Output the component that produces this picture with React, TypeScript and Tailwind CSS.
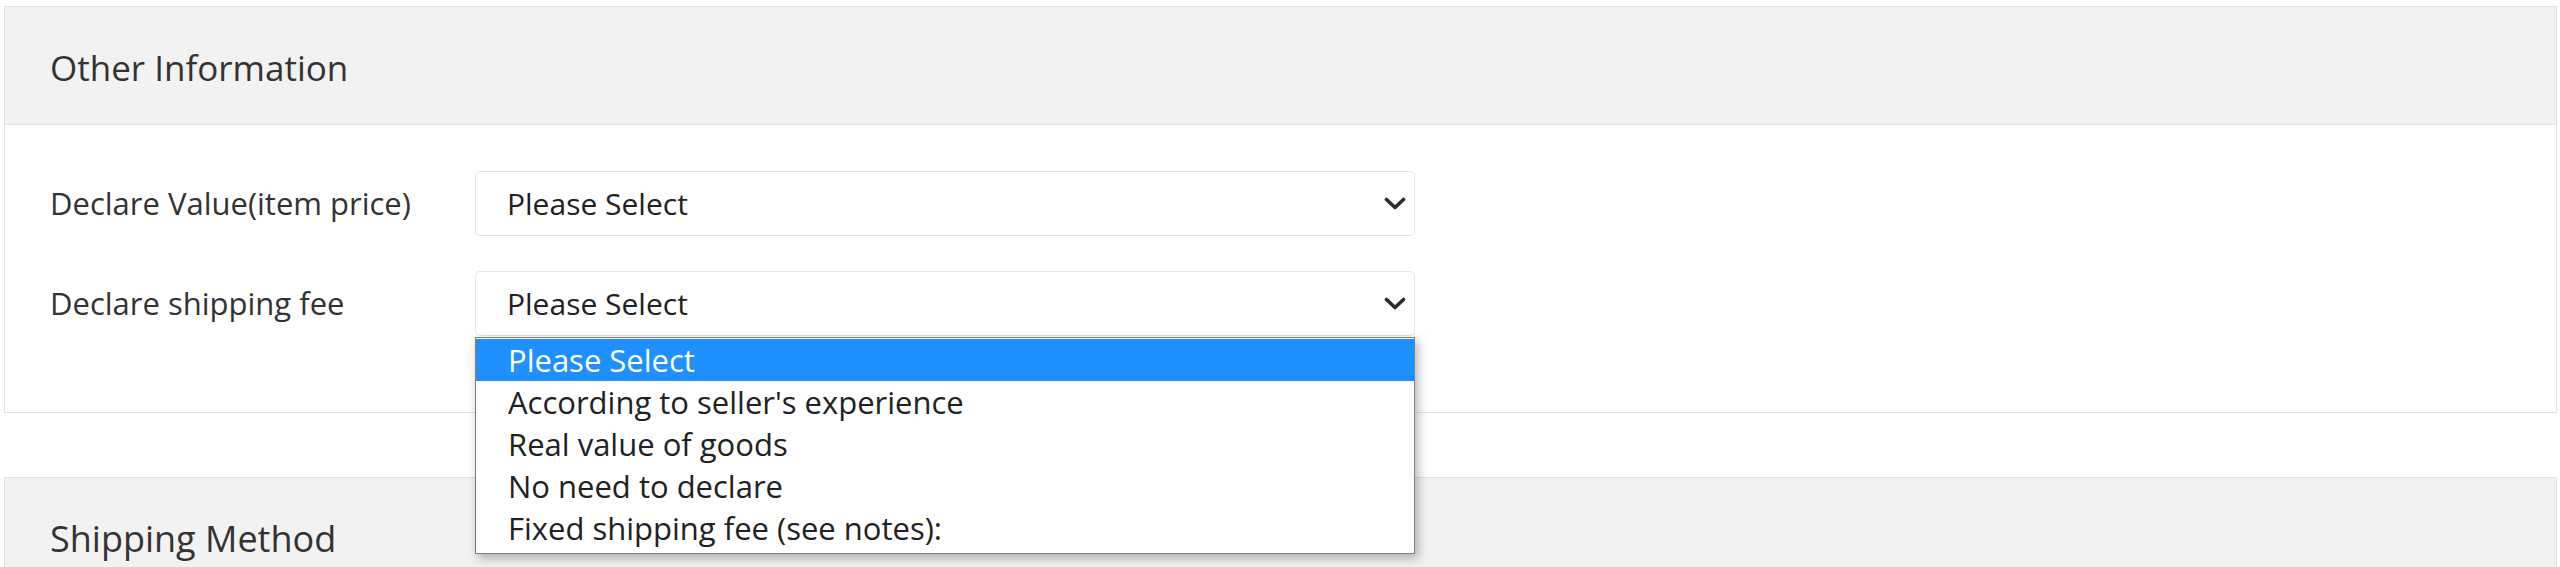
const options = [
  'Please Select',
  "According to seller's experience",
  'Real value of goods',
  'No need to declare',
  'Fixed shipping fee (see notes):',
]

const Chevron = () => (
  <svg width="22" height="14" viewBox="0 0 22 14" className="shrink-0">
    <path d="M2.5 2.5 L11 10.5 L19.5 2.5" fill="none" stroke="#2b2b2b" strokeWidth="3.6" strokeLinecap="round" strokeLinejoin="round" />
  </svg>
)

const FakeSelect = ({ open }: { open?: boolean }) => (
  <div className="relative w-[940px]">
    <div className="flex h-[65px] items-center justify-between rounded-[5px] border border-[#e4e4e4] bg-white pl-[31px] pr-[8px] text-[30px] text-[#222]">
      <span>Please Select</span>
      <Chevron />
    </div>
    {open && (
      <div className="absolute left-0 top-[66px] z-10 w-[940px] border border-[#808080] bg-white pt-[1px] pb-[4px] shadow-[3px_4px_10px_rgba(0,0,0,0.3)]">
        {options.map((o, i) => (
          <div
            key={o}
            className={
              i === 0
                ? 'flex h-[42px] items-center bg-[#1e90ff] pl-[32px] text-[31px] text-white'
                : 'flex h-[42px] items-center pl-[32px] text-[31px] text-[#222]'
            }
          >
            {o}
          </div>
        ))}
      </div>
    )}
  </div>
)

const Row = ({ label, open }: { label: string; open?: boolean }) => (
  <div className="flex items-center">
    <div className="w-[470px] pl-[45px] text-[31px] text-[#333]">{label}</div>
    <FakeSelect open={open} />
  </div>
)

export default function App() {
  return (
    <div
      className="h-[567px] w-full overflow-hidden bg-white pl-[4px] pr-[3px] pt-[6px]"
      style={{ fontFamily: '"Open Sans", "Noto Sans", sans-serif' }}
    >
      <div className="border border-[#e2e2e2]">
        <div className="flex h-[118px] items-center border-b border-[#e2e2e2] bg-[#f2f2f2] pl-[45px] pt-[5px] text-[35px] text-[#333]">
          Other Information
        </div>
        <div className="flex h-[287px] flex-col gap-[35px] bg-white pt-[46px]">
          <Row label="Declare Value(item price)" />
          <Row label="Declare shipping fee" open />
        </div>
      </div>

      <div className="mt-[64px] border border-[#e2e2e2]">
        <div className="flex h-[118px] items-center border-b border-[#e2e2e2] bg-[#f2f2f2] pl-[45px] pt-[5px] text-[36px] text-[#333]">
          Shipping Method
        </div>
      </div>
    </div>
  )
}
